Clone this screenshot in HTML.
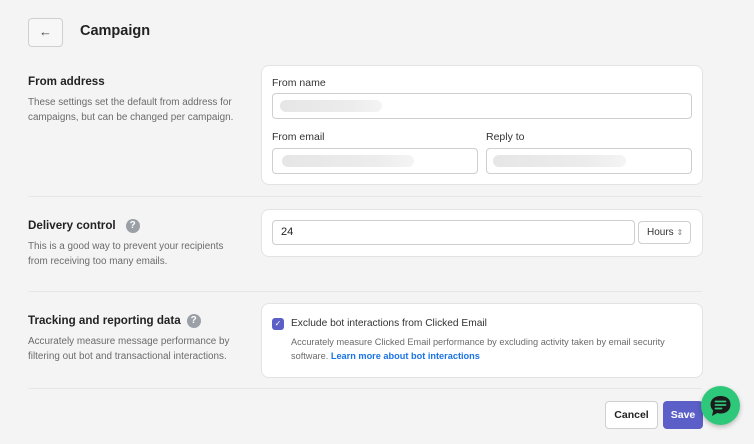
<!DOCTYPE html>
<html><head><style>
*{box-sizing:border-box;margin:0;padding:0}
body{width:754px;height:444px;background:#f4f4f4;font-family:"Liberation Sans",sans-serif;position:relative;overflow:hidden;color:#222}
.a{position:absolute}
.card{position:absolute;background:#fff;border:1px solid #e3e3e3;border-radius:8px;left:261px;width:442px}
.inp{position:absolute;background:#fff;border:1px solid #cfcfcf;border-radius:4px}
.lbl{position:absolute;font-size:10.5px;color:#333}
.h{position:absolute;left:28px;font-size:11.6px;font-weight:bold;color:#222}
.d{position:absolute;left:28px;font-size:9.9px;color:#6b6b6b;line-height:14.5px}
.hr{position:absolute;left:28px;width:674px;height:1px;background:#e6e6e6}
.blur{position:absolute;height:12px;border-radius:6px;background:linear-gradient(90deg,#e6e6e6,#ececec 70%,#f4f4f4)}
.q{display:inline-block;width:14px;height:14px;border-radius:50%;background:#9aa0a6;color:#fff;font-size:10px;text-align:center;line-height:14px;vertical-align:1px;margin-left:8px}
</style></head><body>
<div class="a" style="left:28px;top:18px;width:35px;height:29px;border:1px solid #cfcfcf;border-radius:4px;background:#f7f7f7;text-align:center;line-height:26px;font-size:13px;color:#444">←</div>
<div class="a" style="left:80px;top:23px;font-size:14.5px;font-weight:bold">Campaign</div>

<div class="h" style="top:75px">From address</div>
<div class="d" style="top:96px">These settings set the default from address for<br>campaigns, but can be changed per campaign.</div>
<div class="card" style="top:65px;height:120px"></div>
<div class="lbl" style="left:272px;top:77px">From name</div>
<div class="inp" style="left:272px;top:93px;width:420px;height:26px"></div>
<div class="blur" style="left:280px;top:100px;width:102px"></div>
<div class="lbl" style="left:272px;top:131px">From email</div>
<div class="inp" style="left:272px;top:148px;width:206px;height:26px"></div>
<div class="blur" style="left:282px;top:155px;width:132px"></div>
<div class="lbl" style="left:486px;top:131px">Reply to</div>
<div class="inp" style="left:486px;top:148px;width:206px;height:26px"></div>
<div class="blur" style="left:493px;top:155px;width:133px"></div>
<div class="hr" style="top:196px"></div>

<div class="h" style="top:219px">Delivery control<span class="q" style="margin-left:10px">?</span></div>
<div class="d" style="top:240px">This is a good way to prevent your recipients<br>from receiving too many emails.</div>
<div class="card" style="top:209px;height:48px"></div>
<div class="inp" style="left:272px;top:220px;width:363px;height:25px;font-size:11px;line-height:23px;padding-left:8px">24</div>
<div class="inp" style="left:638px;top:221px;width:53px;height:23px;font-size:10px;line-height:21px;padding-left:8px;color:#333">Hours <span style="font-size:8px;color:#888">⇕</span></div>
<div class="hr" style="top:291px"></div>

<div class="h" style="top:314px">Tracking and reporting data<span class="q" style="margin-left:6px">?</span></div>
<div class="d" style="top:335px">Accurately measure message performance by<br>filtering out bot and transactional interactions.</div>
<div class="card" style="top:303px;height:75px"></div>
<div class="a" style="left:272px;top:318px;width:12px;height:12px;border-radius:3px;background:#5b5fc7;color:#fff;font-size:8px;text-align:center;line-height:12px">✓</div>
<div class="a" style="left:291px;top:318px;font-size:10.2px;color:#333">Exclude bot interactions from Clicked Email</div>
<div class="a" style="left:291px;top:335px;font-size:9.2px;color:#6b6b6b;line-height:14px">Accurately measure Clicked Email performance by excluding activity taken by email security<br>software. <span style="color:#1a73e8;font-weight:bold">Learn more about bot interactions</span></div>
<div class="hr" style="top:388px"></div>

<div class="a" style="left:605px;top:401px;width:53px;height:28px;background:#fff;border:1px solid #cfcfcf;border-radius:4px;font-size:10.5px;font-weight:bold;text-align:center;line-height:26px">Cancel</div>
<div class="a" style="left:663px;top:401px;width:40px;height:28px;background:#5b5fc7;border-radius:4px;font-size:10.5px;font-weight:bold;color:#fff;text-align:center;line-height:28px">Save</div>
<div class="a" style="left:701px;top:386px;width:39px;height:39px;border-radius:50%;background:#2ec87a;box-shadow:0 2px 5px rgba(0,0,0,.25)">
<svg width="39" height="39" viewBox="0 0 39 39"><path d="M19.5 10c-6 0-10 3.6-10 8.5 0 2.4 1 4.5 2.7 6L11 30l5.2-3c1 .3 2.1.5 3.3.5 6 0 10-3.6 10-9S25.5 10 19.5 10z" fill="#1b1b1b"/><path d="M14.5 15.5h10M14.5 19h10M14.5 22.5h6" stroke="#2ec87a" stroke-width="1.8" stroke-linecap="round"/></svg></div>
</body></html>
